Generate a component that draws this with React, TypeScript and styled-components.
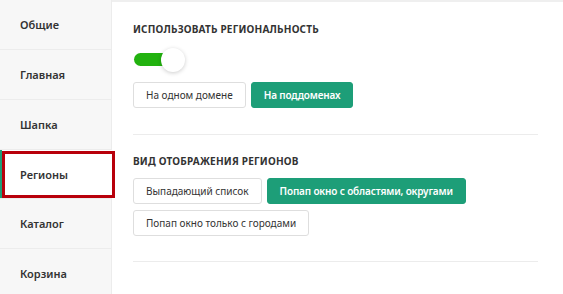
import styled, { createGlobalStyle } from "styled-components";
import { useState } from "react";

const GlobalStyle = createGlobalStyle`
  html, body {
    margin: 0;
    padding: 0;
    background: #fff;
  }
  body {
    font-family: "Noto Sans", "Open Sans", sans-serif;
    color: #333;
  }
`;

const menuItems = ["Общие", "Главная", "Шапка", "Регионы", "Каталог", "Корзина"];

interface OptionGroup {
  title: string;
  options: string[];
  toggle?: boolean;
}

const groups: OptionGroup[] = [
  {
    title: "Использовать региональность",
    options: ["На одном домене", "На поддоменах"],
    toggle: true,
  },
  {
    title: "Вид отображения регионов",
    options: [
      "Выпадающий список",
      "Попап окно с областями, округами",
      "Попап окно только с городами",
    ],
  },
];

export default function App() {
  const [activeMenu, setActiveMenu] = useState(3);
  const [enabled, setEnabled] = useState(true);
  const [selected, setSelected] = useState<number[]>([1, 1]);

  return (
    <Page>
      <GlobalStyle />
      <Sidebar>
        {menuItems.map((item, index) => (
          <MenuItem
            key={item}
            $active={activeMenu === index}
            onClick={() => setActiveMenu(index)}
          >
            {item}
          </MenuItem>
        ))}
      </Sidebar>

      <Content>
        {groups.map((group, groupIndex) => (
          <Section key={group.title}>
            <Heading>{group.title}</Heading>
            {group.toggle && (
              <Toggle $on={enabled} onClick={() => setEnabled(!enabled)}>
                <span />
              </Toggle>
            )}
            <Options>
              {group.options.map((option, index) => (
                <OptionButton
                  key={option}
                  $active={selected[groupIndex] === index}
                  onClick={() => {
                    const next = [...selected];
                    next[groupIndex] = index;
                    setSelected(next);
                  }}
                >
                  {option}
                </OptionButton>
              ))}
            </Options>
          </Section>
        ))}
      </Content>
    </Page>
  );
}

const Page = styled.div`
  display: flex;
  width: 563px;
  height: 294px;
  overflow: hidden;
`;

const Sidebar = styled.nav`
  width: 111px;
  flex-shrink: 0;
  background: #f7f7f7;
  border-right: 1px solid #ececec;
  display: flex;
  flex-direction: column;
`;

const MenuItem = styled.div<{ $active: boolean }>`
  position: relative;
  height: 49px;
  flex-shrink: 0;
  display: flex;
  align-items: center;
  padding-left: 20px;
  font-size: 11px;
  font-weight: 600;
  color: #333;
  cursor: pointer;
  border-bottom: 1px solid #ececec;
  background: ${(p) => (p.$active ? "#fff" : "transparent")};
  box-shadow: ${(p) => (p.$active ? "inset 2px 0 0 #1e9e78" : "none")};
  margin-right: ${(p) => (p.$active ? "-1px" : "0")};

  &:nth-child(4) {
    height: 48px;
  }

  ${(p) =>
    p.$active &&
    `
    &::after {
      content: "";
      position: absolute;
      left: 2px;
      top: 1px;
      right: -3px;
      bottom: 0;
      border: 3px solid #b8000b;
      pointer-events: none;
    }
  `}
`;

const Content = styled.main`
  flex: 1;
  border-top: 2px solid #efefef;
  padding: 0 25px 0 21px;
`;

const Section = styled.section`
  padding: 20px 0 26px;
  border-bottom: 1px solid #ececec;
  display: flex;
  flex-direction: column;
  align-items: flex-start;

  & + & {
    padding-top: 19px;
    padding-bottom: 25px;
  }
`;

const Heading = styled.h3`
  margin: 0 0 10px;
  font-size: 10px;
  font-weight: 700;
  text-transform: uppercase;
  letter-spacing: 0.2px;
  color: #333;
  line-height: 14px;
`;

const Toggle = styled.button<{ $on: boolean }>`
  position: relative;
  width: 40px;
  height: 24px;
  margin: 2px 0 10px 1px;
  padding: 0;
  border: none;
  background: transparent;
  cursor: pointer;

  &::before {
    content: "";
    position: absolute;
    left: 0;
    top: 5px;
    width: 36px;
    height: 13px;
    border-radius: 7px;
    background: ${(p) => (p.$on ? "#22b20f" : "#ccc")};
  }

  span {
    position: absolute;
    top: 0;
    left: ${(p) => (p.$on ? "27px" : "0")};
    width: 24px;
    height: 24px;
    border-radius: 50%;
    background: #fff;
    box-shadow: 0 1px 4px rgba(0, 0, 0, 0.2);
  }
`;

const Options = styled.div`
  display: flex;
  flex-wrap: wrap;
  gap: 6px 5px;
`;

const OptionButton = styled.button<{ $active: boolean }>`
  height: 26px;
  padding: 0 12px;
  font-family: "Noto Sans", "Open Sans", sans-serif;
  font-size: 10px;
  font-weight: ${(p) => (p.$active ? 600 : 400)};
  letter-spacing: ${(p) => (p.$active ? "-0.15px" : "0")};
  color: ${(p) => (p.$active ? "#fff" : "#333")};
  background: ${(p) => (p.$active ? "#1d9e78" : "#fff")};
  border: 1px solid ${(p) => (p.$active ? "#1d9e78" : "#dedede")};
  border-radius: 3px;
  cursor: pointer;
`;
